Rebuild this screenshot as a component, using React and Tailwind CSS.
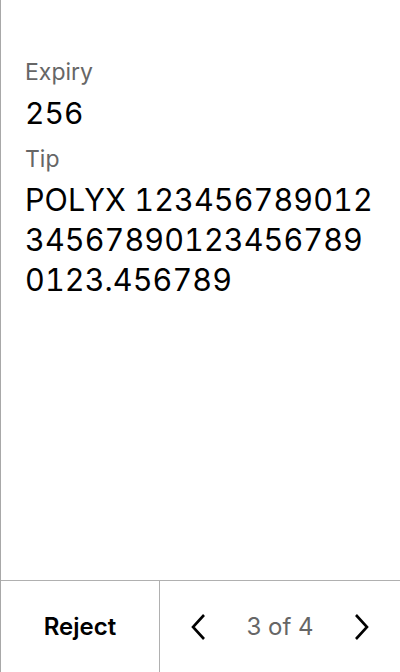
import React from "react";

export default function App() {
  return (
    <div
      className="flex h-[672px] w-[400px] flex-col border-l border-[#a8a8a8] bg-white text-black"
      style={{ fontFamily: "Inter, 'Noto Sans', sans-serif" }}
    >
      {/* Details */}
      <div className="flex-1 pl-[24px] pr-4 pt-[56px]">
        <div className="text-[23px] leading-[32px] text-[#666666]">Expiry</div>
        <div className="mt-[7px] text-[30px] leading-[36px] tabular-nums">256</div>
        <div className="mt-[12px] text-[23px] leading-[32px] text-[#666666]">Tip</div>
        <div className="mt-[5px] text-[30.5px] leading-[40px] tracking-[0.1px] tabular-nums">
          <div>POLYX 123456789012</div>
          <div>34567890123456789</div>
          <div>0123.456789</div>
        </div>
      </div>

      {/* Footer */}
      <div className="flex h-[92px] border-t border-[#b0b0b0]">
        <button className="flex w-[159px] items-center justify-center border-r border-[#b0b0b0] text-[24px] font-semibold">
          Reject
        </button>
        <div className="flex flex-1 items-center justify-between px-[30px]">
          <svg width="18" height="28" viewBox="0 0 18 28" fill="none">
            <path d="M14 2 L3 14 L14 26" stroke="black" strokeWidth="2.6" />
          </svg>
          <span className="text-[24px] text-[#666666]">3 of 4</span>
          <svg width="18" height="28" viewBox="0 0 18 28" fill="none">
            <path d="M4 2 L15 14 L4 26" stroke="black" strokeWidth="2.6" />
          </svg>
        </div>
      </div>
    </div>
  );
}
